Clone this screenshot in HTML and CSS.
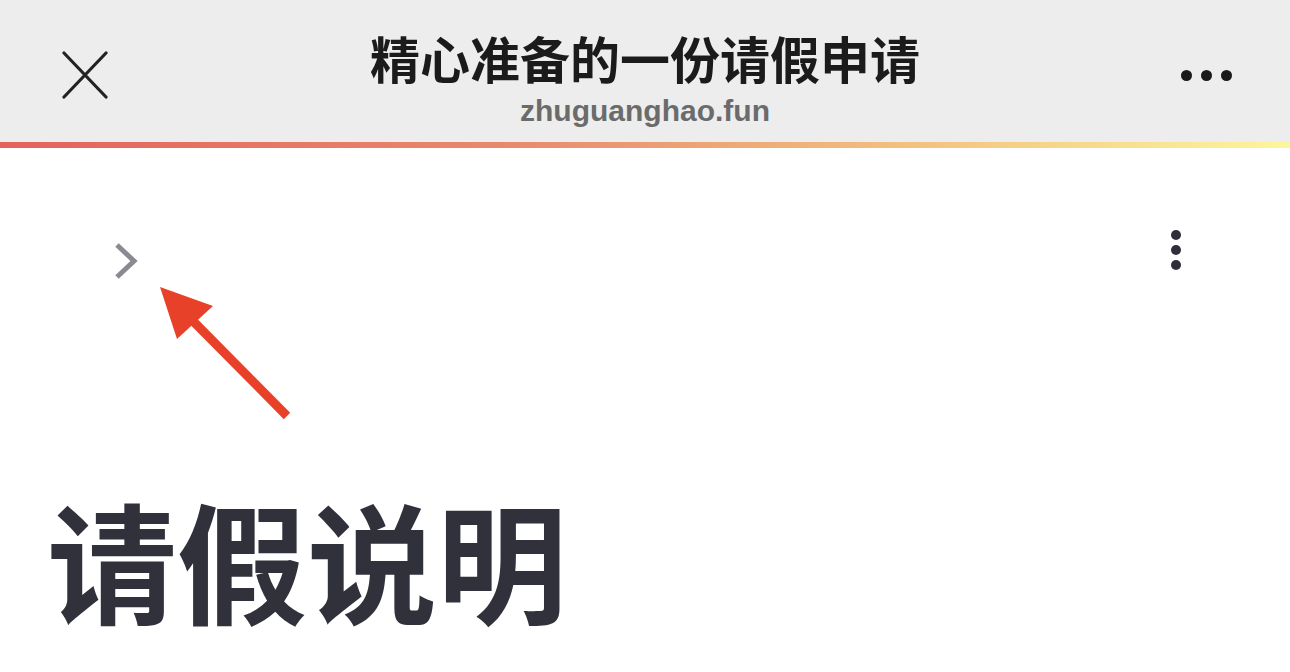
FILE: index.html
```html
<!DOCTYPE html>
<html lang="zh">
<head>
<meta charset="utf-8">
<link rel="stylesheet" href="styles.css">
</head>
<body>
<header class="topbar">
  <div class="side side-left">
    <svg class="close" width="46" height="48" viewBox="0 0 46 48">
      <path d="M2 2 L44 46 M44 2 L2 46" stroke="#222" stroke-width="3.2" stroke-linecap="round" fill="none"/>
    </svg>
  </div>
  <div class="titles">
    <div class="title">精心准备的一份请假申请</div>
    <div class="domain">zhuguanghao.fun</div>
  </div>
  <div class="side side-right">
    <span class="hdot"></span><span class="hdot"></span><span class="hdot"></span>
  </div>
</header>
<div class="progress"></div>
<main class="content">
  <div class="toolbar">
    <svg class="chevron" width="24" height="38" viewBox="0 0 24 38">
      <path d="M3 3 L20 19 L3 35" stroke="#8a8a92" stroke-width="5" fill="none"/>
    </svg>
    <div class="vdots"><span></span><span></span><span></span></div>
  </div>
  <h1 class="heading">请假说明</h1>
  <svg class="pointer" width="150" height="150" viewBox="150 280 150 150">
    <polygon points="160,287 213,306 177,339" fill="#e8412a"/>
    <path d="M190 318 L287 416" stroke="#e8412a" stroke-width="9" fill="none"/>
  </svg>
</main>
</body>
</html>
```
FILE: styles.css
```css
* { box-sizing: border-box; }
html, body { margin: 0; padding: 0; background: #fff; }
body {
  width: 1290px;
  height: 672px;
  overflow: hidden;
  font-family: "Noto Sans CJK SC", "Liberation Sans", sans-serif;
  position: relative;
}
.topbar {
  height: 142px;
  background: #ededed;
  display: flex;
  align-items: stretch;
}
.side {
  width: 170px;
  display: flex;
  align-items: center;
}
.side-left { padding-left: 62px; padding-top: 8px; }
.side-right { justify-content: flex-end; padding-right: 58px; padding-top: 8px; gap: 9px; }
.hdot {
  width: 11px; height: 11px; border-radius: 50%;
  background: #1a1a1a;
}
.titles {
  flex: 1;
  display: flex;
  flex-direction: column;
  align-items: center;
  padding-top: 37px;
}
.title {
  font-family: "Liberation Sans", "Noto Sans CJK SC", sans-serif;
  font-size: 50px;
  line-height: 50px;
  height: 50px;
  font-weight: 700;
  color: #1b1b1b;
}
.domain {
  font-family: "Liberation Sans", "Noto Sans", sans-serif;
  font-size: 30px;
  line-height: 34px;
  font-weight: 700;
  color: #6b6b6b;
  margin-top: 7px;
}
.progress {
  height: 6px;
  background: linear-gradient(90deg, #e4625c 0%, #e88a6e 40%, #f2c07f 70%, #fdf69c 100%);
}
.content {
  position: relative;
}
.toolbar {
  display: flex;
  justify-content: space-between;
  align-items: flex-start;
  padding: 82px 109px 0 114px;
  height: 146px;
}
.chevron { margin-top: 12px; }
.vdots {
  display: flex;
  flex-direction: column;
  gap: 5px;
  width: 10px;
}
.vdots span {
  width: 10px; height: 10px; border-radius: 50%;
  background: #2f2f3a;
}
.heading {
  margin: 0;
  padding-left: 47px;
  font-size: 130px;
  line-height: 160px;
  font-weight: 700;
  color: #30313b;
  margin-top: 183px;
}
.pointer {
  position: absolute;
  left: 150px;
  top: 132px;
}
```
